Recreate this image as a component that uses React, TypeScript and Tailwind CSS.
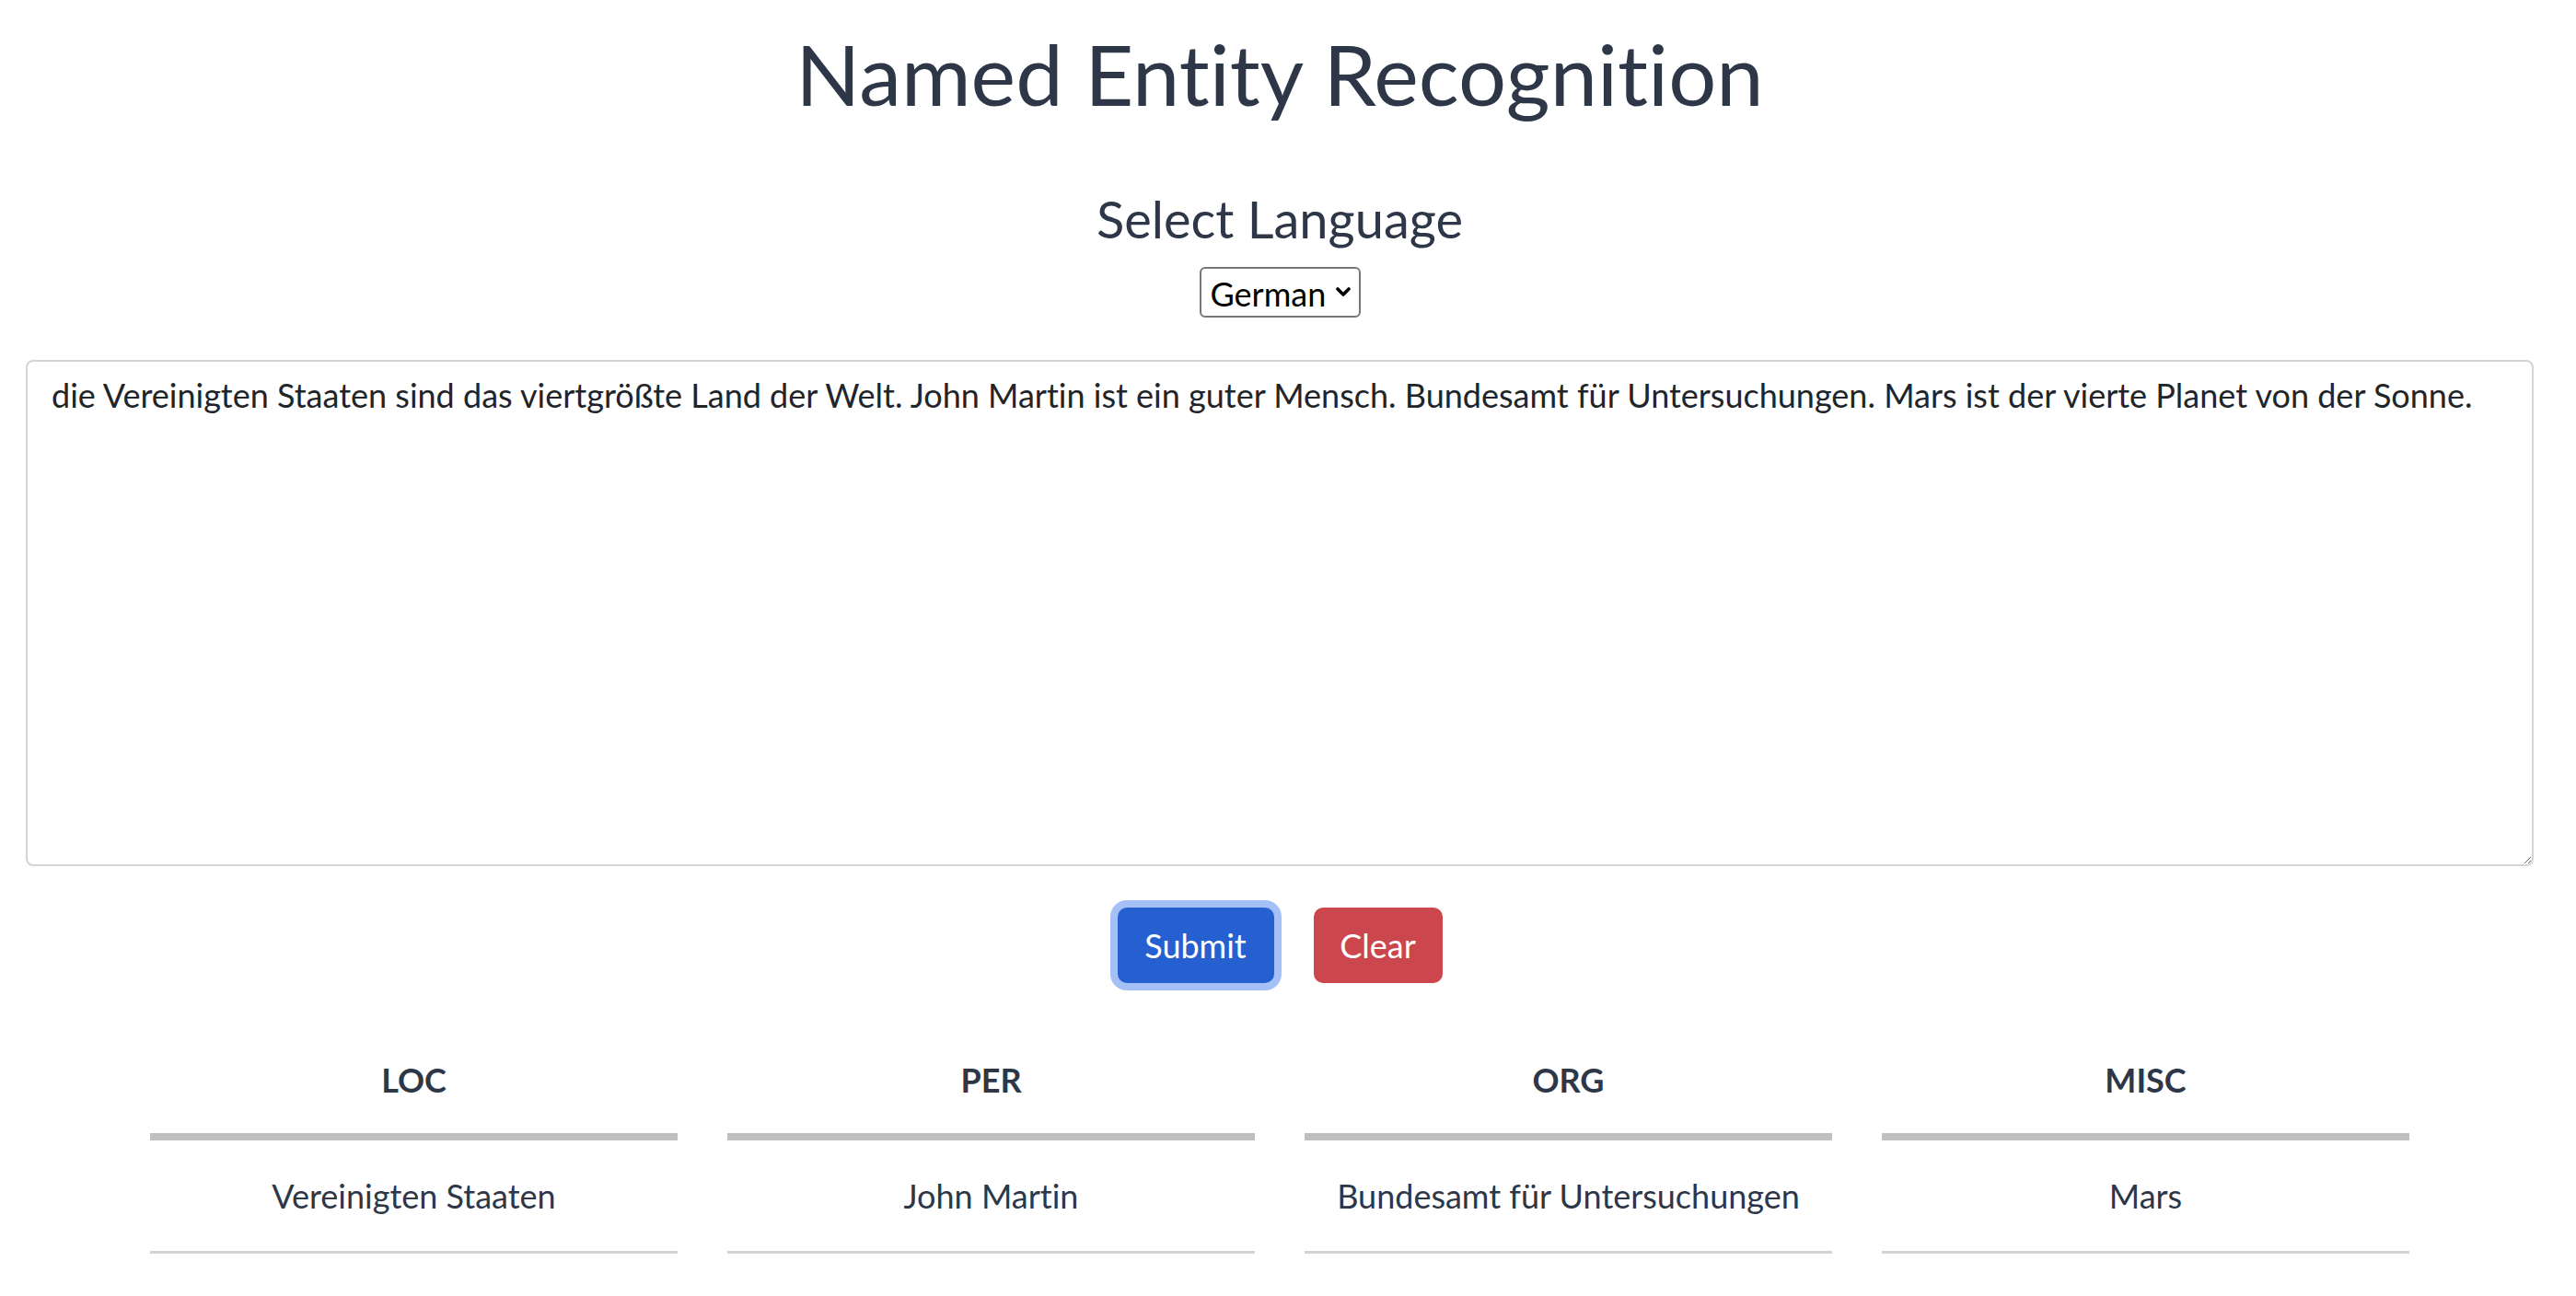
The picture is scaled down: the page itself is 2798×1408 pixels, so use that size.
import React, { useState } from 'react';

const FONT = { fontFamily: 'Lato, "Noto Sans", sans-serif', fontVariantLigatures: 'none' as const };

const initialText =
  'die Vereinigten Staaten sind das viertgrößte Land der Welt. John Martin ist ein guter Mensch. Bundesamt für Untersuchungen. Mars ist der vierte Planet von der Sonne.';

const columns = [
  { label: 'LOC', value: 'Vereinigten Staaten' },
  { label: 'PER', value: 'John Martin' },
  { label: 'ORG', value: 'Bundesamt für Untersuchungen' },
  { label: 'MISC', value: 'Mars' },
];

export default function App() {
  const [text, setText] = useState(initialText);
  const [lang, setLang] = useState('German');

  return (
    <div className="w-[2780px] min-h-[1408px] bg-white text-[#2d3748]" style={FONT}>
      <h1 className="pt-[25px] text-center text-[92px] leading-[1.2] font-normal">
        Named Entity Recognition
      </h1>

      <h2 className="mt-[69px] text-center text-[56px] leading-[1.2] font-normal">
        Select Language
      </h2>

      <div className="mt-[18px] flex justify-center">
        <div className="relative h-[55px] w-[175px]">
          <select
            value={lang}
            onChange={(e) => setLang(e.target.value)}
            className="h-full w-full appearance-none rounded-[6px] border-2 border-[#767676] bg-white pl-[10px] text-[36px] text-black outline-none"
            style={FONT}
          >
            <option>English</option>
            <option>German</option>
          </select>
          <svg
            className="pointer-events-none absolute right-[11px] top-[22px]"
            width="16"
            height="11"
            viewBox="0 0 16 11"
          >
            <polyline points="2,2 8,8 14,2" fill="none" stroke="#000" strokeWidth="3.6" strokeLinecap="round" strokeLinejoin="round" />
          </svg>
        </div>
      </div>

      <div className="mt-[46px] px-[28px]">
        <textarea
          value={text}
          onChange={(e) => setText(e.target.value)}
          className="block h-[550px] w-full rounded-[8px] border-2 border-[#d4d4d4] px-[26px] py-[15px] text-[36px] leading-[1.2] text-[#212529] outline-none"
          style={FONT}
        />
      </div>

      <div className="mt-[45px] flex justify-center gap-[43px]">
        <button
          className="h-[82px] w-[170px] rounded-[10px] bg-[#2660d0] text-[36px] text-white ring-8 ring-[#a4c0f7]"
          style={FONT}
        >
          Submit
        </button>
        <button
          className="h-[82px] w-[140px] rounded-[10px] bg-[#cc464d] text-[36px] text-white"
          style={FONT}
        >
          Clear
        </button>
      </div>

      <div className="mt-[48px] flex justify-center gap-[54px]">
        {columns.map((c) => (
          <div key={c.label} className="w-[573px]">
            <div className="flex h-[123px] items-center justify-center border-b-[8px] border-[#c0c0c0] text-[36px] font-bold">
              {c.label}
            </div>
            <div className="flex h-[123px] items-center justify-center border-b-[3px] border-[#d3d3d3] text-[36px]">
              {c.value}
            </div>
          </div>
        ))}
      </div>
    </div>
  );
}
